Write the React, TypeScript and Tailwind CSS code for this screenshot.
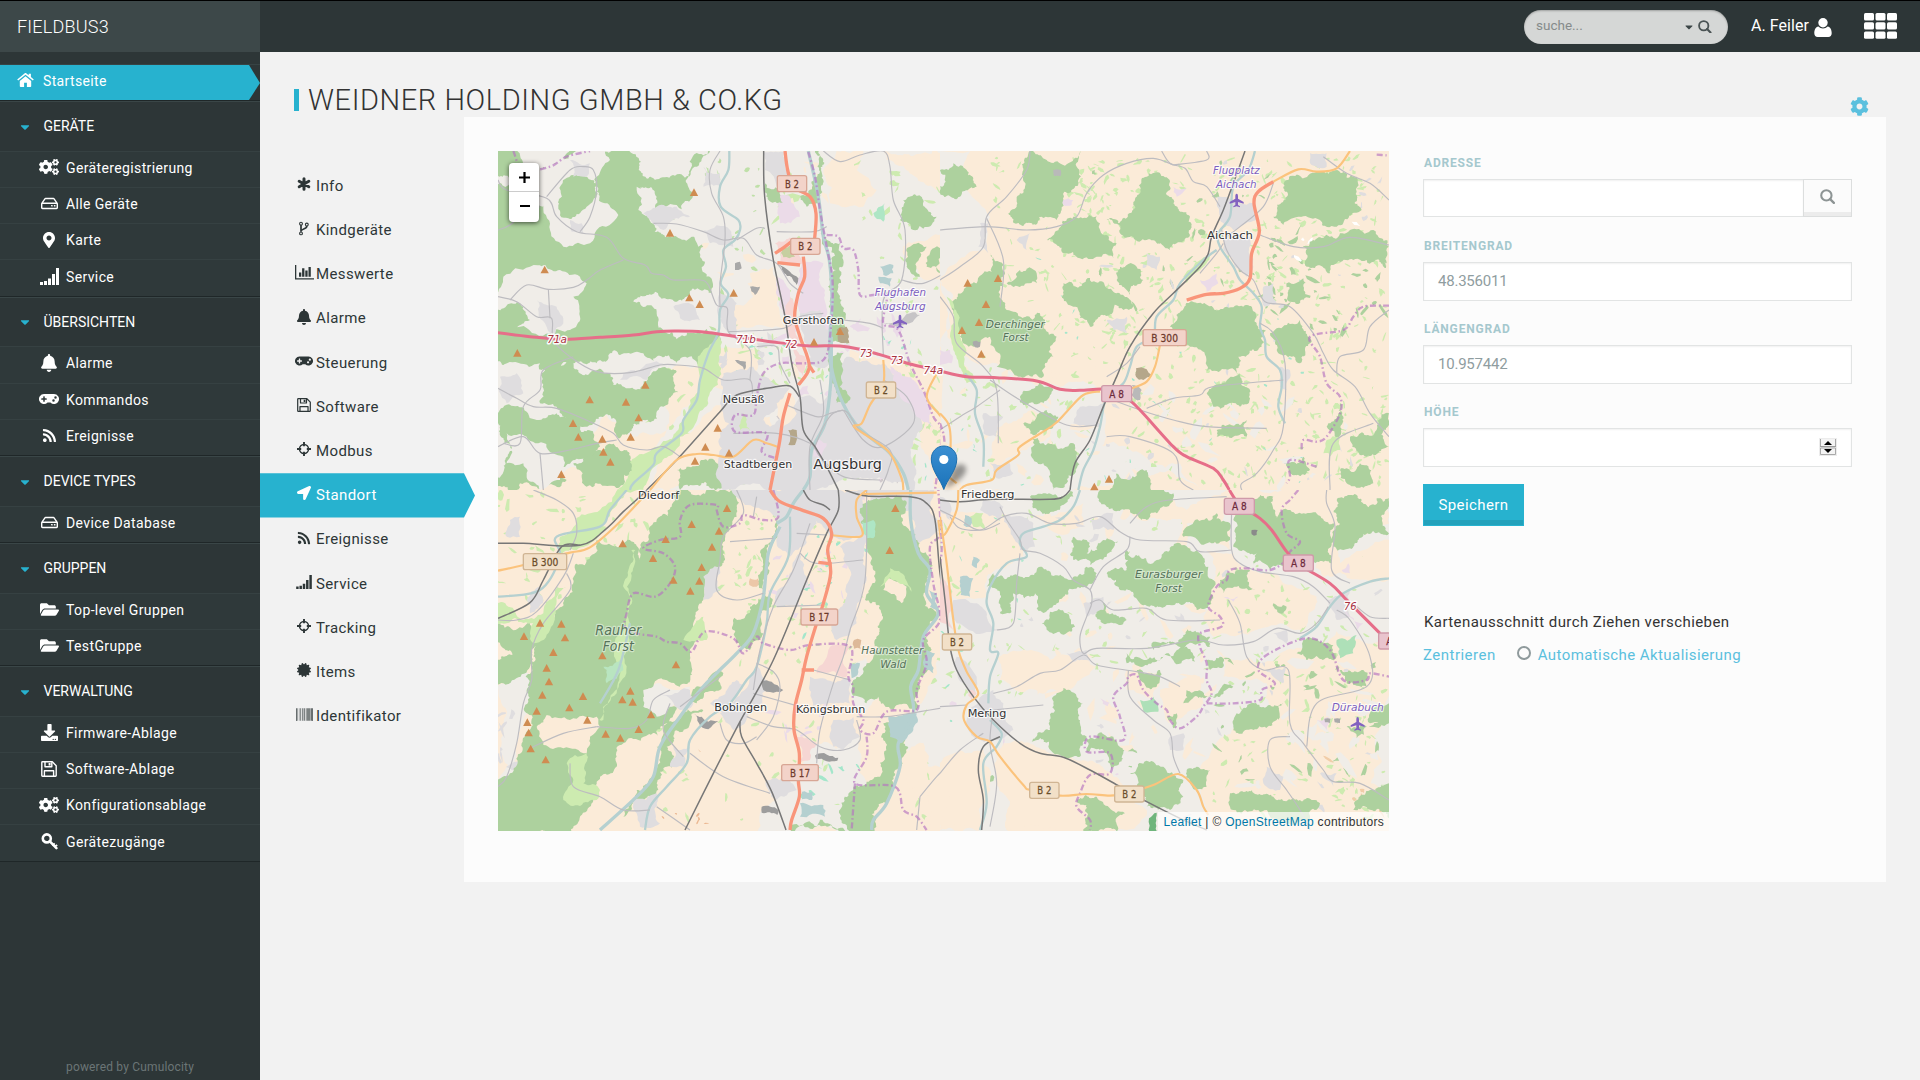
import type { ReactNode } from "react";
import type { IconType } from "react-icons";
import {
  FaBarcode, FaBell, FaCaretDown, FaCertificate, FaCog, FaCogs,
  FaDownload, FaFolderOpen, FaGamepad, FaLocationArrow,
  FaMapMarkerAlt, FaRegHdd, FaRss,
} from "react-icons/fa";

/* ---------- icons ---------- */

type IconProps = { className?: string };

const SignalBars = ({ className }: IconProps) => (
  <svg viewBox="0 0 19 17" className={className} fill="currentColor">
    <path d="M0 14h3v3H0zM4 13h3v4H4zM8 10.5h3V17H8zM12 6h3v11h-3zM16 0h3v17h-3z" />
  </svg>
);

const BarChart = ({ className }: IconProps) => (
  <svg viewBox="0 0 19 15" className={className} fill="currentColor">
    <path d="M0 0h1.3v13.200H19V14.500H0zM4 7.500h2.300v4.300H4zM7.100 3.200h2.300v8.600H7.100zM10.300 5.500h2.300v6.300h-2.300zM13.500 2h2.300v9.800h-2.300z" />
  </svg>
);

const Fork = ({ className }: IconProps) => (
  <svg viewBox="0 0 12 16" className={className} fill="none" stroke="currentColor">
    <circle cx="2.800" cy="2.800" r="1.500" strokeWidth="1.200" />
    <circle cx="2.800" cy="13.200" r="1.500" strokeWidth="1.200" />
    <circle cx="9" cy="3.800" r="1.500" strokeWidth="1.200" />
    <path d="M2.800 4.300v7.200M9 5.300c0 3.700-6.200 2.600-6.200 5.700" strokeWidth="1.800" />
  </svg>
);

const Asterisk = ({ className }: IconProps) => (
  <svg viewBox="0 0 14 14" className={className} stroke="currentColor" strokeWidth="3" strokeLinecap="round">
    <path d="M7 1.700v10.600M2.200 4.300l9.600 5.400M2.200 9.700l9.600-5.400" />
  </svg>
);

const Target = ({ className }: IconProps) => (
  <svg viewBox="0 0 14 14" className={className} fill="none" stroke="currentColor">
    <circle cx="7" cy="7" r="4.500" strokeWidth="1.500" />
    <path d="M7 0v4.200M7 9.800V14M0 7h4.200M9.800 7H14" strokeWidth="1.900" />
  </svg>
);

const Floppy = ({ className }: IconProps) => (
  <svg viewBox="0 0 16 16" className={className} fill="none" stroke="currentColor" strokeWidth="1.400" strokeLinejoin="round">
    <path d="M.8 1.500c0-.4.300-.7.700-.7h9.800l3.900 3.900v9.800c0 .4-.3.700-.7.700h-13c-.4 0-.7-.3-.7-.7z" />
    <path d="M3.400 15v-5.200h9.200V15M4 1v4.700h6.800V1.200" />
    <path d="M8.600 2v2.600" strokeWidth="2" />
  </svg>
);

const KeyIcon = ({ className }: IconProps) => (
  <svg viewBox="0 0 17 17" className={className} fill="none" stroke="currentColor">
    <circle cx="5.800" cy="5.400" r="4" strokeWidth="2.600" />
    <path d="M8.600 8.200l6.800 7" strokeWidth="2.500" strokeLinecap="round" />
    <path d="M11.400 12.600l2.300-2.200M13.800 13.600l2.400-1.600" strokeWidth="1.800" />
  </svg>
);

const House = ({ className }: IconProps) => (
  <svg viewBox="0 0 17 14" className={className} fill="currentColor">
    <path d="M8.500 3.300L14.200 8v5.200c0 .4-.3.800-.8.800H9.900V9.800H7.100V14H3.600c-.4 0-.8-.3-.8-.8V8z" />
    <path d="M8.500 0c.4 0 .7.100 1 .4l2.200 1.800V.7h2.200V4l2.900 2.500-1 1.100L8.500 1.700 1.200 7.600l-1-1.100L7.500.4c.3-.3.600-.4 1-.4z" />
  </svg>
);

const Magnifier = ({ className }: IconProps) => (
  <svg viewBox="0 0 16 16" className={className} fill="none" stroke="currentColor">
    <circle cx="6.800" cy="6.800" r="5.500" strokeWidth="2.200" />
    <path d="M10.800 10.800l4 4" strokeWidth="2.500" strokeLinecap="round" />
  </svg>
);

const Grid9 = ({ className }: IconProps) => (
  <svg viewBox="0 0 33 26" className={className} fill="currentColor">
    {[0, 11.5, 23].map((x) => [0, 9.2, 18.4].map((y) => (
      <rect key={`${x}-${y}`} x={x} y={y} width="10" height="7.400" rx="1.500" />
    )))}
  </svg>
);

const Person = ({ className }: IconProps) => (
  <svg viewBox="0 0 18 19" className={className} fill="currentColor">
    <circle cx="9" cy="4.800" r="4.700" />
    <path d="M4.400 8.400C1.500 8.800.3 11.800.3 15.300.3 17.600 1.600 19 3.700 19h10.600c2.100 0 3.400-1.400 3.400-3.700 0-3.500-1.200-6.500-4.100-6.900-1.200 1.200-2.800 2-4.600 2s-3.400-.8-4.600-2z" />
  </svg>
);

/* ---------- sidebar ---------- */

type AnyIcon = IconType | ((p: IconProps) => ReactNode);
type Item = { label: string; icon: AnyIcon; size?: string };

const sections: { title: string; items: Item[] }[] = [
  { title: "GERÄTE", items: [
    { label: "Geräteregistrierung", icon: FaCogs, size: "size-5" },
    { label: "Alle Geräte", icon: FaRegHdd },
    { label: "Karte", icon: FaMapMarkerAlt, size: "size-4" },
    { label: "Service", icon: SignalBars, size: "w-[19px] h-[17px]" },
  ] },
  { title: "ÜBERSICHTEN", items: [
    { label: "Alarme", icon: FaBell, size: "size-[18px]" },
    { label: "Kommandos", icon: FaGamepad, size: "size-5" },
    { label: "Ereignisse", icon: FaRss, size: "size-[15px]" },
  ] },
  { title: "DEVICE TYPES", items: [{ label: "Device Database", icon: FaRegHdd }] },
  { title: "GRUPPEN", items: [
    { label: "Top-level Gruppen", icon: FaFolderOpen, size: "size-[19px]" },
    { label: "TestGruppe", icon: FaFolderOpen, size: "size-[19px]" },
  ] },
  { title: "VERWALTUNG", items: [
    { label: "Firmware-Ablage", icon: FaDownload },
    { label: "Software-Ablage", icon: Floppy, size: "size-4" },
    { label: "Konfigurationsablage", icon: FaCogs, size: "size-5" },
    { label: "Gerätezugänge", icon: KeyIcon, size: "size-[17px]" },
  ] },
];

function Sidebar() {
  return (
    <aside className="flex w-[260px] shrink-0 flex-col bg-[#2d3637] text-white">
      <div className="flex h-[51px] items-center bg-[#3d4849] pl-[17px] text-[18px] font-light tracking-[0.22px]">
        FIELDBUS3
      </div>
      <div className="mt-3 border-t border-[#374344]">
        <div className="flex h-[35px] items-center bg-[#27b2cf] pl-[17px] text-[14px] tracking-[0.36px] [clip-path:polygon(0_0,249px_0,260px_18px,249px_35px,0_35px)]">
          <House className="-mt-1.5 h-3.5 w-[17px]" />
          <span className="-mt-0.5 ml-[9px]">Startseite</span>
        </div>
        <div className="h-px bg-[#1f2728]" />
      </div>
      {sections.map((s) => (
        <div key={s.title} className="border-b border-[#1f2728]">
          <div className="flex h-[49.6px] items-center border-t border-[#3a4647] pl-[18px] pt-px text-[14px]">
            <FaCaretDown className="size-3.5 text-[#27b2cf]" />
            <span className="ml-[11.5px]">{s.title}</span>
          </div>
          {s.items.map(({ label, icon: Icon, size }) => (
            <div key={label} className="flex h-[36.27px] items-center border-t border-[#364142] bg-[#2f393a] pb-[2px] pl-[39px] text-[14px] tracking-[0.37px]">
              <span className="-mt-0.5 flex w-5 justify-center">
                <Icon className={`${size ?? "size-[17px]"} shrink-0`} />
              </span>
              <span className="ml-[7px]">{label}</span>
            </div>
          ))}
        </div>
      ))}
      <div className="mt-auto pb-[5px] text-center text-[12px] leading-4 tracking-[0.17px] text-[#6b7576]">powered by Cumulocity</div>
    </aside>
  );
}

/* ---------- tabs ---------- */

const tabs: (Item & { active?: boolean })[] = [
  { label: "Info", icon: Asterisk, size: "size-[14px]" },
  { label: "Kindgeräte", icon: Fork, size: "w-3 h-[15px]" },
  { label: "Messwerte", icon: BarChart, size: "w-[19px] h-[15px]" },
  { label: "Alarme", icon: FaBell, size: "size-[16px]" },
  { label: "Steuerung", icon: FaGamepad, size: "size-[18px]" },
  { label: "Software", icon: Floppy, size: "size-[14px]" },
  { label: "Modbus", icon: Target, size: "size-[14px]" },
  { label: "Standort", icon: FaLocationArrow, size: "size-[14px]", active: true },
  { label: "Ereignisse", icon: FaRss, size: "size-[14px]" },
  { label: "Service", icon: SignalBars, size: "w-4 h-[14px]" },
  { label: "Tracking", icon: Target, size: "size-[14px]" },
  { label: "Items", icon: FaCertificate, size: "size-[14px]" },
  { label: "Identifikator", icon: FaBarcode, size: "size-[17px]" },
];

function Tabs() {
  return (
    <nav className="w-[204px] shrink-0 pt-[47px]">
      {tabs.map(({ label, icon: Icon, size, active }) => (
        <div
          key={label}
          className={`flex h-[44.2px] items-center pl-[34px] text-[15px] tracking-[0.38px] ${
            active
              ? "relative z-10 -mr-[11px] bg-[#27b2cf] text-white [clip-path:polygon(0_0,204px_0,215px_50%,204px_100%,0_100%)]"
              : "text-[#2d3637]"
          }`}
        >
          <span className="-mt-1 flex w-5 justify-center">
            <Icon className={`${size} shrink-0`} />
          </span>
          <span className="ml-0.5">{label}</span>
        </div>
      ))}
    </nav>
  );
}

/* ---------- map ---------- */

type Pt = [number, number];

const makeRng = (seed: number) => () => {
  seed = (seed * 1664525 + 1013904223) >>> 0;
  return seed / 4294967296;
};

const pts = (s: string): Pt[] => s.trim().split(/\s+/).map((p) => p.split(",").map(Number) as Pt);

/* Splits every edge by midpoint displacement, for natural looking outlines. */
function rough(s: string, seed: number, amount = 0.2, min = 14) {
  const rnd = makeRng(seed);
  const src = pts(s);
  const out: Pt[] = [];
  const walk = (a: Pt, b: Pt) => {
    const dx = b[0] - a[0];
    const dy = b[1] - a[1];
    const len = Math.hypot(dx, dy);
    if (len < min) { out.push(a); return; }
    const k = (rnd() - 0.5) * 2 * amount;
    const m: Pt = [(a[0] + b[0]) / 2 - dy * k, (a[1] + b[1]) / 2 + dx * k];
    walk(a, m);
    walk(m, b);
  };
  src.forEach((p, i) => walk(p, src[(i + 1) % src.length]));
  return "M" + out.map((p) => p[0].toFixed(0) + " " + p[1].toFixed(0)).join("L") + "Z";
}

function smooth(s: string) {
  const p = pts(s);
  let d = `M${p[0][0]} ${p[0][1]}`;
  for (let i = 0; i < p.length - 1; i++) {
    const a = p[i - 1] ?? p[i];
    const b = p[i];
    const c = p[i + 1];
    const e = p[i + 2] ?? c;
    d += `C${b[0] + (c[0] - a[0]) / 6} ${b[1] + (c[1] - a[1]) / 6} ${c[0] - (e[0] - b[0]) / 6} ${c[1] - (e[1] - b[1]) / 6} ${c[0]} ${c[1]}`;
  }
  return d;
}

const LAND = "#f0ede8";
const FARM = "#fbebd8";
const FOREST = "#add19e";
const GRASS = "#cdebb0";
const TOWN = "#dfdddf";
const WATER = "#b5d0d0";
const PINK = "#ebdbe8";

type Line = [kind: "road" | "river" | "stream" | "rail" | "mway" | "trunk" | "prim" | "border", path: string];
type Label = [text: string, x: number, y: number, w: number, size: number];
type Sheet = {
  ox: number; oy: number; base: string;
  areas: [string, string][];
  specks: [color: string, x0: number, y0: number, x1: number, y1: number, n: number, r: number][];
  lines: Line[];
  peaks: string;
  towns: Label[];
  woods: Label[];
  airports: Label[];
  planes: string;
  exits: [string, number, number][];
  shields: [string, number, number, number, "a" | "b" | "c"][];
};

const NW: Sheet = {
  ox: 490, oy: 150, base: LAND,
  areas: [
    [FARM, "780,370 850,350 870,440 895,540 740,540 720,470 790,440"],
    [FARM, "530,660 640,640 660,700 600,760 540,830 500,850 420,860 350,795 325,830 300,880 430,990 480,900 530,840"],
    [FARM, "660,590 800,600 790,670 700,720 650,660"],
    [FARM, "1000,70 1040,3 1120,3 1100,60 1160,120 1120,170 1020,160"],
    [FARM, "1080,600 1380,680 1380,1020 1330,1020 1290,860 1250,740 1140,680"],
    [FARM, "560,860 700,760 840,800 860,1020 480,1020"],
    [FARM, "1240,290 1380,240 1380,380 1290,380"],
    [FARM, "1180,3 1380,3 1380,120 1260,70"],
    [FARM, "24,985 480,985 480,1025 24,1025"],
    [FOREST, "20,0 270,0 160,50 150,140 90,95 20,75"],
    [FOREST, "340,0 660,0 600,60 610,130 540,210 500,140 450,110 455,190 560,260 640,290 650,380 665,430 560,455 430,455 500,490 520,540 690,560 650,640 560,640 500,620 420,640 360,610 320,640 250,640 170,660 20,630 20,110 120,160 300,200"],
    [LAND, "165,55 200,40 270,0 345,0 360,30 320,80 310,130 345,160 385,195 320,240 300,280 230,292 180,240 160,170 110,140 90,100 130,70"],
    [LAND, "440,110 470,130 490,180 560,165 600,180 650,210 660,280 625,290 600,210 540,210 520,255 445,180"],
    [LAND, "40,380 120,350 210,360 270,380 290,400 250,440 270,500 240,540 180,550 20,545 20,440"],
    [FOREST, "20,480 100,470 120,510 60,545 20,545"],
    [FOREST, "210,110 250,75 310,90 310,150 270,190 235,205 205,170"],
    [LAND, "360,625 460,610 520,640 520,665 370,705"],
    [LAND, "20,650 150,640 165,700 150,760 20,780"],
    [FOREST, "155,670 250,630 360,670 370,705 530,655 560,665 520,770 460,810 415,850 385,865 360,795 330,800 285,830 200,770 150,760"],
    [FOREST, "20,790 200,790 310,850 330,890 290,930 200,950 230,990 190,1005 90,1000 20,1012"],
    [LAND, "50,850 110,860 220,920 210,990 150,1020 100,940 50,940"],
    [FOREST, "250,940 330,900 420,930 430,960 400,1005 290,1010"],
    [GRASS, "640,600 690,555 685,640 655,760 570,860 510,940 460,1020 380,1020 500,890 570,820 600,750 630,690"],
    [FOREST, "560,960 640,930 720,980 720,1020 570,1020"],
    [TOWN, "140,450 200,470 220,520 190,560 165,520"],
    [TOWN, "30,680 80,670 100,730 50,760"],
    [TOWN, "240,30 300,40 290,80 250,80"],
    [TOWN, "240,210 275,220 280,250 245,245"],
    [TOWN, "400,670 480,640 520,640 470,690 390,690"],
    [TOWN, "640,50 690,70 690,110 640,110"],
    [TOWN, "640,240 720,240 730,290 660,280"],
    [TOWN, "690,430 740,460 740,560 700,530"],
    [TOWN, "460,190 560,170 600,200 520,240"],
    [TOWN, "550,470 610,465 630,510 570,505"],
    [PINK, "850,140 900,140 930,200 870,220"],
    [PINK, "860,380 900,420 930,540 890,560 870,470"],
    ["#f6d6d3", "900,440 915,540 950,640 940,680 910,600 885,520"],
    [PINK, "940,330 1000,340 1020,560 950,570 930,440"],
    [TOWN, "930,490 990,480 1020,570 1010,650 960,640"],
    [TOWN, "700,670 790,650 850,700 900,710 820,810 720,830 690,760"],
    [TOWN, "840,830 930,740 1000,760 1070,620 1180,640 1250,710 1300,790 1270,880 1270,1025 840,1025 700,1025 690,850 750,780"],
    [TOWN, "820,6 880,6 900,100 860,110 825,60"],
    [PINK, "1200,650 1280,700 1330,830 1280,800 1230,740"],
    [FARM, "860,760 900,720 920,790 880,830"],
    ["#f6d6d3", "855,280 900,262 940,340 870,342"],
    ["#c6cfa0", "875,295 905,285 915,320 880,322"],
    [FOREST, "825,100 870,120 880,160 830,130"],
    [FOREST, "930,140 975,0 1000,30 1000,90 985,160 950,170"],
    [FOREST, "1000,240 1050,280 1060,330 1050,380 1055,450 1060,520 1075,580 1020,560 1020,400"],
    [FOREST, "1010,600 1060,610 1060,660 1080,750 1040,760 1020,690"],
    [FOREST, "1240,150 1300,150 1340,200 1270,240 1230,210"],
    [FOREST, "1260,290 1310,290 1290,380 1250,350"],
    [FOREST, "1320,310 1370,290 1350,370 1310,350"],
    ["#b5a78a", "1040,540 1070,530 1078,580 1045,575"],
    ["#b5a78a", "895,840 920,840 915,885 895,885"],
    ["#aee6c5", "1150,190 1185,160 1180,215"],
    [WATER, "1170,350 1210,345 1210,370 1180,375"],
    [WATER, "1165,380 1205,385 1200,410 1170,400"],
    ["#9a9a9a", "860,340 900,365 925,385 920,405 880,370"],
    ["#a8a8a8", "735,340 750,335 755,355 735,360"],
    ["#a8a8a8", "780,410 810,410 795,435"],
    ["#a8a8a8", "735,630 768,635 762,660"],
    [GRASS, "760,790 780,840 750,840"],
    [PINK, "980,860 1010,880 1000,930 970,920"],
    ["#c6c4c6", "1180,520 1260,490 1290,495 1220,530"],
  ],
  specks: [
    [GRASS, 830, 20, 930, 330, 14, 12], [GRASS, 860, 330, 1010, 700, 30, 8], [GRASS, 700, 560, 860, 800, 24, 10],
    [GRASS, 1030, 600, 1380, 1000, 60, 9], [GRASS, 1080, 20, 1380, 480, 34, 9], [PINK, 860, 500, 1300, 1000, 30, 16],
    [FARM, 830, 620, 1300, 1000, 26, 12], ["#a4e6cb", 700, 560, 1380, 1000, 60, 5], [GRASS, 720, 800, 1250, 1000, 50, 8],
    [TOWN, 640, 560, 860, 760, 12, 14], [GRASS, 440, 600, 640, 900, 12, 10], [FARM, 880, 20, 1010, 250, 8, 16],
    ["#bfe0a8", 640, 20, 820, 560, 22, 7], [FARM, 640, 280, 800, 560, 6, 16], ["#cfc9cb", 860, 780, 1240, 1000, 30, 9],
  ],
  lines: [
    ["stream", "718,3 715,60 690,110 692,170 745,210 750,240 735,270 700,300 708,350 692,400 715,435 690,480 686,545 655,610 630,690 620,750 580,810 575,850 500,910 490,945 430,1000 420,1020"],
    ["river", "955,3 985,140 1000,260 1018,330 1026,450 1020,560 1022,640 1050,740 1095,820 1150,870 1200,910 1240,970 1255,1020"],
    ["river", "1024,560 1022,700 1005,820 965,900 960,980 940,1020"],
    ["road", "24,90 50,120 170,145 200,200 260,245 350,262 400,325 465,345 485,370 520,375 550,390 630,390 655,405 680,465 712,475 715,545 780,600 780,690"],
    ["road", "170,140 240,60 280,50 310,60 320,120 300,200 270,245"],
    ["road", "24,440 80,455 140,500 185,505 190,570 240,620 320,665 420,668 510,645 560,645 640,655 700,690 780,690 785,760"],
    ["road", "24,240 60,225 100,190 150,170"],
    ["road", "24,715 80,745 130,770 200,775 300,815 370,850 400,885 470,900 520,890 570,920"],
    ["road", "400,330 330,360 290,390 250,412 175,418 110,405 60,450"],
    ["road", "175,418 180,505"], ["road", "250,620 160,660 150,720 100,770 90,880 40,880"],
    ["road", "690,3 660,60 665,130 700,200 705,270 690,400 690,470"],
    ["road", "490,220 560,222 640,245 700,270 760,265 800,315 860,340 900,400 940,430"],
    ["road", "1000,3 1050,35 1110,15 1180,3 1200,50 1210,150 1245,240 1235,390 1180,450 1180,620"],
    ["road", "740,270 800,235 825,235"], ["road", "860,245 970,245 1010,230"],
    ["road", "715,545 880,535 930,500 1000,490"], ["road", "1235,390 1300,400 1380,360"],
    ["road", "1060,510 1140,520 1180,535"], ["road", "800,590 860,590 870,640 900,700"],
    ["road", "24,890 100,860 150,910 240,900 320,880 380,870"], ["road", "150,910 160,1020"],
    ["road", "890,765 980,800 1020,790 1060,780"], ["road", "1060,780 1120,870 1180,890 1270,820 1250,740 1180,690"],
    ["road", "730,850 860,850 960,880 990,920 1060,980 1170,990"], ["road", "990,690 1000,790 960,890 960,1020"],
    ["border", "955,6 975,80 990,180 1010,290 1028,400 1020,560 1000,630 940,640 870,640 820,670 800,740 790,795 735,795 735,845 830,850 815,905 860,925"],
    ["border", "1010,255 1045,260 1060,295 1090,300 1105,360 1110,435 1150,435 1190,440 1180,520 1225,540 1260,640 1300,720 1330,800 1355,850 1335,1020"],
    ["border", "70,3 100,60 180,50 230,20 300,3"],
    ["rail", "821,3 824,140 850,330 885,500 905,640 930,740 940,840 975,890 1010,950 1045,1020"],
    ["rail", "470,1020 560,930 690,785 740,735 850,712 900,708 928,740"],
    ["road", "975,890 1000,830 1030,790 1070,785 1110,840 1200,900 1195,960 1170,1020"],
    ["prim", "480,1020 560,930 620,912 670,915 730,920 790,870 830,880 862,890"],
    ["prim", "1180,630 1180,700 1140,765 1115,820 1092,830 1150,870 1200,910 1235,985 1240,1020"],
    ["prim", "1340,670 1310,740 1345,790 1380,830"],
    ["trunk", "885,3 893,60 910,110 960,140 978,190 974,265"],
    ["trunk", "855,310 885,290 910,270"], ["trunk", "862,338 930,345"],
    ["trunk", "940,320 944,380 925,430 914,500 930,560 958,650 925,705"],
    ["trunk", "956,645 972,668"],
    ["trunk", "900,730 880,800 868,880 850,970 840,1020"],
    ["mway", "0,545 120,560 220,568 330,562 430,555 500,545 560,543 640,546 740,560 850,576 950,587 1050,588 1110,598 1180,617 1260,642 1380,668"],
  ],
  peaks: "612,128 540,250 164,360 598,444 629,464 731,430 82,610 466,706 299,750 408,757 446,804 249,821 265,862 337,868 422,862 340,907 361,937 214,974 683,835 646,892 717,910 615,934 972,577 1050,545",
  towns: [["Gersthofen", 970, 521, 184, 34], ["Neusäß", 761, 760, 126, 34], ["Stadtbergen", 804, 955, 205, 34], ["Augsburg", 1073, 958, 206, 43]],
  woods: [],
  airports: [["Flughafen", 1231, 438, 154, 34], ["Augsburg", 1231, 479, 152, 34]],
  planes: "1230,514",
  exits: [["71a", 201, 580], ["71b", 768, 578], ["72", 903, 595], ["73", 1128, 620], ["73", 1221, 643], ["74a", 1330, 671]],
  shields: [["B 2", 906, 101, 88, "b"], ["B 2", 946, 289, 88, "b"], ["B 2", 1173, 720, 88, "c"]],
};

const NE: Sheet = {
  ox: 940, oy: 150, base: FARM,
  areas: [
    [LAND, "0,3 90,3 80,120 150,200 130,300 0,390"], [LAND, "0,390 40,440 40,600 0,580"],
    [LAND, "0,580 170,640 330,700 480,730 480,900 400,1020 60,1020 0,800"],
    [LAND, "400,860 560,890 720,940 780,1020 380,1020"],
    [FARM, "170,830 280,780 330,860 260,900 160,960"],
    [FOREST, "270,0 420,0 415,90 365,180 350,210 250,228 205,190 240,130 250,60"],
    [FOREST, "0,60 40,40 80,60 110,110 60,140 0,130"],
    [FOREST, "620,80 690,95 700,160 750,200 750,255 690,300 620,270 540,250 500,210 590,140"],
    [FOREST, "345,245 480,220 530,280 520,325 420,325 370,310 320,270"],
    [FOREST, "40,490 110,400 150,310 190,345 180,420 200,480 300,490 350,560 340,620 310,680 220,670 170,650 150,560 100,590 60,560"],
    [FOREST, "370,400 520,425 580,470 480,500 450,530 400,470"],
    [FOREST, "540,350 590,350 610,390 570,435 530,390"],
    [FOREST, "690,530 770,460 860,470 950,500 965,590 895,620 890,670 800,665 750,590 700,570"],
    [FOREST, "1040,90 1250,80 1265,180 1190,230 1140,210 1030,225 1000,200 1040,140"],
    [FOREST, "1120,270 1200,250 1300,240 1347,290 1340,340 1240,330 1170,370 1100,350"],
    [FOREST, "990,550 1080,510 1110,580 1080,640 1010,600"],
    [FOREST, "800,730 900,670 930,720 900,770 820,770"],
    [FOREST, "830,840 920,810 920,860 830,860"],
    [FOREST, "240,740 300,695 340,720 310,760 250,765"],
    [FOREST, "250,820 320,780 355,800 340,830 270,850"],
    [FOREST, "275,860 400,880 410,920 380,1000 340,1020 310,940"],
    [FOREST, "500,1025 530,970 620,960 640,1025"],
    [FOREST, "1040,400 1090,385 1100,440 1050,455"],
    [FOREST, "1160,830 1200,760 1210,800 1190,870"],
    [FOREST, "1230,860 1347,790 1347,890 1280,920"],
    [FOREST, "1040,940 1090,920 1110,960 1050,970"],
    [FOREST, "1200,960 1260,940 1300,1000 1220,1000"],
    [FOREST, "240,360 290,370 290,400 200,400"],
    [GRASS, "1160,870 1200,860 1200,900 1150,910"],
    [GRASS, "20,440 60,560 80,660 110,700 80,700 40,600"],
    [GRASS, "600,340 650,330 640,345"],
    [GRASS, "730,380 760,350 830,300 800,340 740,400"],
    [TOWN, "830,140 900,160 940,160 950,210 880,240 840,200"],
    [TOWN, "860,250 930,260 940,350 920,380 850,300"],
    [TOWN, "120,220 145,220 145,310 115,290"], [TOWN, "230,270 270,250 260,300"],
    [TOWN, "500,510 560,500 560,550 520,540"], [TOWN, "620,310 660,320 650,360 620,345"],
    [TOWN, "1110,10 1160,10 1160,50 1110,40"], [TOWN, "420,770 490,760 480,830 400,820"],
    [TOWN, "130,790 190,800 170,860 130,850"], [TOWN, "150,940 210,940 220,970 170,985"],
    [TOWN, "970,410 1000,400 1010,460 975,470"], [TOWN, "1020,650 1050,660 1040,720 1020,710"],
    [PINK, "780,390 830,370 835,400 800,425"], [PINK, "700,110 740,115 710,140"], [PINK, "0,600 30,600 35,640 0,645"],
    [PINK, "370,150 400,150 395,165 370,165"],
    ["#b5a78a", "588,655 620,658 635,675 610,690 588,680"],
    ["#b9b9b9", "575,705 605,720 600,750 575,735"],
    ["#aaaaaa", "98,575 122,575 120,590 105,592"], ["#b9b9b9", "340,60 362,60 362,78 342,78"],
  ],
  specks: [
    [GRASS, 400, 20, 1340, 700, 380, 7], [GRASS, 150, 20, 600, 560, 110, 7], [GRASS, 560, 700, 1340, 1010, 190, 7],
    [GRASS, 20, 600, 480, 1000, 70, 7], [FOREST, 980, 240, 1340, 560, 60, 10], [FOREST, 420, 20, 1000, 500, 26, 9],
    [TOWN, 420, 20, 1340, 1010, 40, 9], [FARM, 20, 640, 480, 1010, 24, 16], [FARM, 1020, 90, 1340, 350, 14, 9],
    [LAND, 560, 720, 1300, 1010, 26, 20], ["#a4e6cb", 60, 300, 1100, 1010, 26, 4], ["#ffffff", 1060, 200, 1340, 360, 8, 8],
  ],
  lines: [
    ["stream", "945,3 925,60 880,110 870,200 835,250 840,290 880,350 900,390 940,430 965,470 960,530 975,570 980,620 1020,660 1025,710 1015,770 1035,820"],
    ["stream", "830,300 790,330 720,400 700,450 650,500 640,560 590,590 570,650 550,700 500,740 480,830 460,900 430,960 415,1020"],
    ["stream", "75,670 110,720 105,790 130,870 130,950"],
    ["road", "270,3 260,60 200,140 140,200 130,290 60,350 0,390"], ["road", "0,240 140,230 260,240 350,230 410,200 440,130 490,75 560,40 640,25 700,45"],
    ["road", "665,3 690,40 735,55 760,95 800,110 840,170"], ["road", "700,45 800,30 800,3"],
    ["road", "960,255 1060,290 1150,290 1230,262 1347,285"], ["road", "845,240 860,300 900,360 940,390 975,455 1050,470 1120,550 1150,610 1180,660 1245,710 1290,790 1347,860"],
    ["road", "960,520 1000,550 1035,640 1030,830 1000,900 950,970 905,1000 905,1020"],
    ["road", "140,205 190,330 180,470"], ["road", "150,690 240,750 380,825 470,825"],
    ["road", "490,740 600,780 700,810 800,830 980,835"], ["road", "620,775 700,745 780,735 820,710 1030,690"],
    ["road", "500,860 570,860 700,910 720,990 760,1020"], ["road", "0,440 40,500 50,580 130,650 170,720 175,880"],
    ["road", "1000,100 970,170 900,230 860,260"], ["road", "1300,820 1180,880 1170,1020"], ["road", "1347,480 1290,530 1270,600 1200,620 1190,670"],
    ["road", "0,840 60,800 110,770 180,720"], ["road", "500,680 560,640 600,590"], ["road", "1150,20 1220,70 1290,100 1347,150"],
    ["road", "780,370 830,310 850,280"],
    ["border", "1310,14 1340,16"], ["border", "1347,467 1270,470 1240,500 1210,540 1110,560 1140,620 1160,700 1200,740 1200,790 1160,860 1130,875 1090,870 1085,900"],
    ["border", "1130,950 1050,930 1050,980 1040,1000"], ["border", "0,820 10,850 14,880"],
    ["rail", "915,3 880,100 850,180 815,260 805,310 780,350 700,430 640,490 570,590 530,680 490,770 450,870 405,940 390,1020"],
    ["prim", "1230,3 1190,55 1130,65 1075,58 1000,95"], ["prim", "660,585 645,650 620,695 575,715"],
    ["prim", "480,724 430,735 380,785 340,825 240,890 235,915 170,960 155,990 80,1005 60,1020"], ["prim", "0,790 28,830 30,910 10,960 50,1000"],
    ["trunk", "1000,95 955,125 942,160 958,245 935,310 930,385 900,415 850,430 800,433 740,450"],
    ["mway", "0,663 80,680 170,683 290,693 360,718 420,721 500,718 560,745 600,780 700,890 740,920 820,955 850,990 868,1020"],
  ],
  peaks: "83,400 174,386 138,464 117,518 66,542 124,613 507,988 463,1011",
  towns: [["Aichach", 870, 266, 138, 34]],
  woods: [["Derchinger", 226, 533, 177, 34], ["Forst", 227, 574, 78, 34]],
  airports: [["Flugplatz", 889, 72, 140, 34], ["Aichach", 889, 113, 122, 34]],
  planes: "890,151",
  exits: [],
  shields: [["B 300", 674, 563, 130, "b"], ["A 8", 530, 731, 90, "a"]],
};

const SW: Sheet = {
  ox: 490, oy: 490, base: FARM,
  areas: [
    [LAND, "20,590 100,540 135,560 100,700 80,830 60,870 20,900"],
    [LAND, "800,1030 880,860 960,760 1110,740 1130,880 1080,1030"],
    [LAND, "1280,660 1380,480 1380,840 1290,830 1240,740"],
    [LAND, "1080,530 1130,500 1170,620 1120,670 1080,610"],
    [FOREST, "320,150 420,150 450,210 480,130 545,50 560,-5 740,-5 740,80 700,170 690,230 640,330 610,410 600,490 570,590 470,600 430,640 500,640 560,650 400,760 380,800 330,860 240,1030 20,1030 20,880 60,850 95,760 110,600 130,450 200,360 250,280 300,200"],
    [FOREST, "20,400 120,400 130,520 40,580 20,590"],
    [FARM, "140,710 170,675 240,690 320,680 330,710 300,740 290,790 220,775 160,765"],
    [LAND, "460,600 500,580 600,590 560,640 500,680 460,650"],
    [GRASS, "230,820 290,790 280,880 330,900 320,930 220,930 250,870"],
    [GRASS, "20,340 100,390 160,370 200,290 230,290 180,420 130,460 130,400 20,400"],
    [GRASS, "210,140 330,60 385,-5 450,-5 340,100 260,180 200,200"],
    [GRASS, "424,180 436,180 420,400 405,560 340,690 328,690 388,560 408,400"],
    [FOREST, "855,130 870,80 900,90 840,220 840,320 820,430 780,480 735,440 780,350 820,300"],
    [FOREST, "500,770 560,690 640,660 600,700 530,770 500,880 460,930 400,980 440,900 490,860"],
    [FOREST, "580,640 640,590 700,550 690,600 620,640"],
    [GRASS, "580,450 640,380 650,450 600,455"],
    [TOWN, "720,-5 920,-5 980,100 900,200 860,160 870,80 830,60"],
    [TOWN, "900,-5 1120,-5 1130,140 1020,140 940,60"],
    [TOWN, "1050,170 1130,140 1130,270 1100,400 1040,450 1040,360"],
    [TOWN, "860,310 930,190 950,260 920,350 860,350"],
    [TOWN, "510,610 600,600 610,640 570,660"], [TOWN, "690,670 800,530 830,580 770,680 730,720"],
    [TOWN, "660,640 740,570 760,590 700,670"], [TOWN, "960,560 1080,560 1080,640 970,650"],
    [TOWN, "1030,690 1090,680 1110,740 1060,780 1030,770"], [TOWN, "430,930 500,910 510,1000 450,1010"],
    [TOWN, "830,870 900,850 920,900 860,930"], [TOWN, "550,770 600,770 580,830 540,830"],
    [TOWN, "640,260 690,230 690,300 640,330"], [TOWN, "110,330 150,290 160,330 120,370"],
    [TOWN, "60,90 90,80 90,140 50,140"], [TOWN, "1120,-5 1330,-5 1350,120 1280,160 1260,60 1140,40"],
    ["#f6d6d3", "1020,470 1080,470 1070,560 980,550"], ["#f6d6d3", "920,740 980,760 960,810 930,820"],
    [FOREST, "1125,40 1180,25 1250,35 1290,180 1310,300 1340,380 1300,440 1280,660 1210,660 1170,600 1130,640 1085,610 1100,560 1130,520 1125,330 1150,240 1130,150"],
    [FOREST, "1180,700 1240,740 1210,860 1190,940 1150,1030 1080,1030 1090,890 1170,860"],
    [FARM, "1180,300 1190,260 1250,290 1235,340"], [GRASS, "1170,290 1200,235 1245,265 1265,305 1245,285 1200,262"],
    [WATER, "1195,680 1280,670 1270,720 1230,760 1200,740"],
    [WATER, "1080,520 1110,520 1085,565"], [WATER, "1310,480 1335,490 1330,550 1305,540"], [WATER, "1315,300 1340,310 1340,360 1320,350"],
    [WATER, "930,940 1000,945 1005,980 930,980"], [WATER, "936,905 968,905 966,930 936,928"],
    ["#aee6c5", "1115,95 1150,90 1150,145 1130,145"], ["#b9e5c0", "340,530 390,510 400,540 350,580"],
    ["#ecc7a8", "780,265 805,265 800,290 778,285"], ["#ddb999", "1092,450 1114,450 1112,476 1092,476"],
    [FARM, "1240,800 1300,760 1320,840 1260,900"],
    [FARM, "1310,920 1380,840 1380,1020 1320,1000"],
    ["#9d9d9d", "815,575 845,575 880,600 860,605 820,600"], ["#9d9d9d", "815,950 865,960 862,975 815,968"],
    ["#9d9d9d", "975,797 1045,803 1042,812 978,806"], ["#9d9d9d", "612,670 655,695 685,693 655,718"],
    [FOREST, "900,1000 1000,1008 1080,1030 900,1030"],
  ],
  specks: [
    [GRASS, 24, 0, 380, 330, 36, 8], [GRASS, 740, 0, 1130, 560, 80, 7], ["#a4e6cb", 860, 60, 1130, 460, 34, 6],
    [PINK, 840, 0, 1120, 420, 24, 10], [GRASS, 600, 180, 860, 440, 14, 8], [GRASS, 1130, 160, 1280, 330, 14, 11],
    [TOWN, 24, 600, 90, 860, 8, 12], [GRASS, 500, 620, 1060, 1010, 34, 7], [GRASS, 330, 0, 470, 180, 12, 9],
    ["#a4e6cb", 920, 820, 1110, 960, 10, 9], [GRASS, 1280, 480, 1380, 1010, 14, 8], ["#ebb892", 500, 780, 700, 1000, 7, 5],
    [PINK, 780, 560, 1000, 740, 8, 12], [FARM, 950, 0, 1120, 420, 14, 9],
  ],
  lines: [
    ["river", "860,100 890,80 910,40 940,0"],
    ["river", "870,110 835,190 820,320 790,430 740,490 640,590 570,680 510,770 490,860 440,920 330,1020"],
    ["stream", "900,80 895,200 840,310 830,400 800,530 770,570 720,640 660,680 600,750 590,820 530,890 480,950 465,1020"],
    ["stream", "410,0 360,60 330,110 200,140 210,200 150,300 24,320"],
    ["stream", "420,400 385,540 330,640"],
    ["river", "1262,0 1262,90 1285,190 1320,240 1310,310 1345,370 1300,440 1285,540 1262,590 1270,670 1225,760 1230,830 1190,940 1150,990 1145,1020"],
    ["road", "130,0 200,30 250,70 260,130 240,180"], ["road", "24,390 80,390 140,365 220,260 250,190"],
    ["road", "230,250 240,300 160,400 125,480 125,570 100,640 80,760 50,860 24,890"],
    ["road", "740,0 760,70 700,140 690,210 680,300 740,330 820,310"], ["road", "720,155 850,145"], ["road", "860,350 1000,345"],
    ["road", "960,100 910,240 850,350 810,480 790,600"], ["road", "800,520 850,545 870,590 850,680 800,750"],
    ["road", "690,700 710,750 760,760 800,740"], ["road", "770,680 850,710 920,720 990,770 1060,780 1110,750 1100,690"],
    ["road", "1130,0 1125,270 1080,420 1060,500 1030,580 990,720 980,820"], ["road", "970,540 1080,570"], ["road", "790,610 930,650"],
    ["road", "600,790 700,860 840,910"], ["road", "320,710 420,715 470,690 490,630 540,600"], ["road", "540,640 520,720 580,800"],
    ["road", "120,775 220,730 320,710"], ["road", "240,820 250,890 330,920 400,960 480,960"], ["road", "1100,680 1190,680 1290,665 1380,650"],
    ["road", "690,560 570,650"], ["road", "1290,920 1340,860 1380,820"], ["road", "1290,920 1280,1020"], ["road", "930,190 980,220 1120,210"],
    ["road", "500,950 600,1020"], ["road", "800,20 790,80"], ["road", "920,130 1010,135"],
    ["border", "850,0 865,80 820,90 760,75 750,100 700,110 680,60 680,45 600,45 570,90 570,140 510,150 460,175 520,190 555,230 540,280 495,320 430,310 410,370 405,410 440,430 500,440 530,455 570,460 605,485 645,425 730,445 760,490 800,440 820,460 900,480 960,465 1080,470 1075,560 1090,590 1090,640 1120,690 1110,720 1150,730 1190,665 1280,660 1280,600 1310,520 1300,450 1350,390 1330,280 1320,170 1350,130 1345,0"],
    ["border", "1130,740 1130,800 1095,880 1215,890 1240,960 1280,980 1310,1020"], ["border", "1095,880 1085,1020"],
    ["rail", "24,160 100,160 270,166 350,115 400,65 450,20 472,0"], ["rail", "24,385 120,338 160,270 215,170 270,166"],
    ["rail", "1045,0 1045,60 1010,130 950,270 850,510 750,695 670,850 585,1020"], ["rail", "750,695 755,740 800,820 845,905 888,1020"],
    ["rail", "940,0 960,30 1000,45 1020,60"],
    ["rail", "1065,0 1130,18 1260,20 1310,40 1335,90 1350,250 1378,430"],
    ["prim", "24,242 100,225 160,205 240,188 300,172 380,105 480,0"],
    ["prim", "1130,0 1100,30 1100,80 1115,138 1020,135"], ["prim", "1120,12 1340,8"], ["prim", "1345,90 1380,350"],
    ["trunk", "840,0 870,35 940,62 1000,85 1025,130 1013,180 1022,250 1000,340 980,400 950,500 935,570 915,650 912,720 928,790 925,870 928,920 905,990 900,1020"],
    ["trunk", "985,217 1025,222"], ["trunk", "935,540 972,540"],
  ],
  peaks: "711,56 605,104 687,124 527,149 398,162 489,206 666,172 635,233 550,271 628,274 601,304 150,400 214,403 102,440 225,444 190,488 337,498 170,535 177,576 558,525 157,616 279,620 421,604 397,630 428,637 140,664 238,654 483,675 112,698 292,691 446,719 116,729 347,733 391,745 122,777 167,810 1216,56 1199,182",
  towns: [["Diedorf", 506, 27, 124, 34], ["Bobingen", 752, 664, 158, 34], ["Königsbrunn", 1022, 669, 208, 34]],
  woods: [["Rauher", 385, 436, 138, 40], ["Forst", 385, 484, 94, 40], ["Haunstetter", 1207, 492, 186, 34], ["Wald", 1210, 533, 78, 34]],
  airports: [], planes: "", exits: [],
  shields: [["B 300", 165, 215, 130, "c"], ["B 17", 988, 381, 110, "b"], ["B 17", 930, 848, 110, "b"]],
};

const SE: Sheet = {
  ox: 940, oy: 490, base: LAND,
  areas: [
    [FARM, "0,60 180,60 240,100 250,200 140,260 140,320 40,320 0,200"],
    [FARM, "280,80 430,40 430,110 330,120"],
    [FARM, "800,180 880,190 1000,250 1130,320 1090,420 1020,400 820,440 790,380"],
    [FARM, "830,480 960,520 1040,480 1347,440 1347,1020 820,1020 750,860 850,740 1000,660 980,580 850,560"],
    [FARM, "560,540 650,550 640,620 560,600"],
    [FARM, "170,500 330,510 470,530 420,570 180,570"],
    [FARM, "0,820 130,780 120,1020 0,1020"],
    [FARM, "190,760 330,790 520,860 620,960 560,1020 200,1020 170,860"],
    [FARM, "500,0 740,60 860,0 870,180 760,100 600,90"],
    [FARM, "860,-5 1347,-5 1347,100 900,100"],
    [FARM, "1120,0 1200,0 1200,220 1347,150 1347,270 1150,260"],
    [FARM, "660,600 780,560 790,640 700,700"],
    [FOREST, "480,-5 660,-5 700,10 680,50 620,90 570,60 500,50"],
    [FOREST, "270,20 310,10 390,-5 400,20 340,65 280,55"],
    [FOREST, "740,110 830,70 870,100 870,150 780,160 730,140"],
    [FOREST, "880,90 960,15 1000,20 1010,85 1180,100 1175,220 1100,230 1040,220 940,225 950,190 880,170"],
    [FOREST, "1190,30 1230,15 1347,25 1347,130 1240,170 1180,170"],
    [FOREST, "560,180 650,210 720,160 770,180 805,230 820,325 770,360 660,350 600,340 540,300 500,250 560,240"],
    [FOREST, "160,250 300,230 370,260 440,230 470,250 420,295 370,320 350,340 290,355 285,310 220,310 210,370 180,370 180,310 140,290"],
    [FOREST, "400,140 440,150 440,190 490,150 535,155 500,200 400,210"],
    [FOREST, "560,490 740,470 765,515 600,530 560,520"],
    [FOREST, "640,455 740,415 810,440 810,470 640,480"],
    [FOREST, "800,510 840,500 850,530 810,540"],
    [FOREST, "305,400 330,365 380,370 405,410 340,432"],
    [FOREST, "460,330 500,370 560,390 520,400 470,370"],
    [FOREST, "340,640 390,600 430,640 420,700 440,740 420,800 360,795 275,755 330,720"],
    [FOREST, "440,750 520,740 550,790 515,840 500,790 440,785"],
    [FOREST, "570,850 640,815 730,870 730,920 690,960 620,950 600,900"],
    [FOREST, "410,930 470,920 555,970 530,1030 420,1030"],
    [FOREST, "740,840 810,840 800,890 750,880"],
    [FOREST, "870,910 1000,920 1140,940 1100,1000 980,960 880,960"],
    [FOREST, "890,670 1030,640 1010,690 940,720 880,710"],
    [FOREST, "1090,450 1180,465 1190,500 1070,490"],
    [FOREST, "840,270 930,240 945,300 850,310"],
    [FOREST, "1290,650 1347,640 1347,700 1290,700"],
    [FOREST, "1290,900 1347,880 1347,990 1240,960"],
    [FOREST, "1220,710 1280,710 1250,745"], [FOREST, "1200,540 1270,540 1280,590 1220,580"],
    [FOREST, "1000,340 1040,350 1030,370"], [FOREST, "590,540 660,540 650,590 600,570"],
    [FOREST, "740,600 880,590 840,620 730,640"], [FOREST, "680,680 710,670 700,715"],
    ["#aee0b8", "1190,450 1250,435 1240,490 1200,505"], ["#aee0b8", "600,630 640,620 655,665 610,665"],
    [GRASS, "90,80 130,70 140,120 100,110"],
    [TOWN, "130,30 190,50 180,90 120,60"], [TOWN, "190,80 280,100 285,170 240,180"],
    [TOWN, "40,330 110,340 170,420 130,430 50,400"], [TOWN, "0,20 30,40 30,90 0,60"],
    [TOWN, "50,500 110,560 110,620 70,580"], [TOWN, "80,690 160,600 190,640 220,720 170,750 100,740"],
    [TOWN, "450,90 520,70 520,120 460,120"], [TOWN, "430,340 490,320 490,360 440,380"],
    [TOWN, "380,490 440,480 450,515 400,515"], [TOWN, "690,740 730,730 730,780 690,780"],
    [TOWN, "1000,430 1040,420 1040,460"], [TOWN, "1160,330 1230,300 1230,380 1190,390"],
    [TOWN, "975,540 1040,530 1030,580"], [TOWN, "980,830 1030,860 1020,900 970,880"], [TOWN, "1140,850 1190,850 1180,890"],
    [PINK, "1215,360 1270,400 1250,420"], [PINK, "1205,240 1225,220 1230,250"], [PINK, "1130,690 1165,680 1160,720"],
    [PINK, "845,315 895,320 880,335"], ["#f6d6d3", "5,260 30,330 40,420 10,400"], ["#f6d6d3", "85,600 110,610 95,630"],
    [WATER, "60,260 100,265 90,320 62,315"], [WATER, "75,75 95,85 90,110 70,105"], [WATER, "100,200 120,210 110,235 95,225"],
    ["#8a8a8a", "935,120 953,120 950,135 935,133"], ["#aaaaaa", "1153,686 1172,686 1170,699 1155,697"], ["#aaaaaa", "1182,686 1201,686 1200,699 1184,697"],
    ["#6fb57c", "627,985 650,968 655,1030 630,1030"],
  ],
  specks: [
    [GRASS, 820, 180, 1340, 1010, 150, 7], [GRASS, 0, 60, 280, 640, 56, 7], [GRASS, 280, 80, 820, 560, 60, 7],
    [FARM, 280, 60, 820, 800, 54, 17], [FOREST, 820, 480, 1340, 880, 32, 10], [FOREST, 20, 780, 600, 1010, 12, 9],
    [TOWN, 200, 80, 1320, 1000, 44, 9], [LAND, 900, 500, 1340, 900, 24, 20], ["#a4e6cb", 0, 40, 260, 700, 14, 5],
    [PINK, 0, 600, 560, 1000, 10, 7], ["#f1cda8", 1140, 780, 1340, 1000, 10, 8],
  ],
  lines: [
    ["stream", "420,0 400,50 360,90 310,110 250,130 240,160 260,200 200,220 150,290 140,340 160,400 150,480 175,490 150,560 145,640"],
    ["stream", "150,690 185,730 170,770 130,820 140,940 120,1020"],
    ["stream", "1347,265 1290,275 1210,310 1170,350 1130,410 1080,445"],
    ["road", "0,60 60,90 120,120 190,80 260,70 330,100 410,100 480,80 540,125 600,150 740,155 780,185 875,180"],
    ["road", "180,50 200,90 240,150 250,180 300,190 370,230 400,270 450,300 455,340 440,380 420,440 430,490 470,475 620,475 770,450 850,465 940,455 1010,415 1080,430 1130,400 1165,350"],
    ["road", "570,140 560,180 490,230 450,300"], ["road", "570,100 620,50 690,30 860,20"], ["road", "875,60 875,180 900,220 960,245 1060,260 1120,290 1170,340"],
    ["road", "160,610 230,590 300,550 360,540 430,495 470,525 590,545 660,560 720,590"], ["road", "450,340 480,330 520,360 620,355 680,390 840,390"],
    ["road", "565,540 570,620 640,690 690,730 700,800 720,850"], ["road", "865,330 900,400 920,500 970,540 1045,540 1050,700 1090,760 1150,840 1180,875 1260,880 1347,930"],
    ["road", "1160,0 1160,40 1185,110 1175,240 1230,280"], ["road", "1190,360 1230,390 1290,500 1280,590 1130,640 1100,770"], ["road", "1240,340 1290,380 1347,385"],
    ["road", "0,650 80,645"], ["road", "160,660 310,645"], ["road", "0,850 60,780 130,730"], ["road", "1050,740 990,750 990,830 1040,900 1080,960 1110,1020"],
    ["road", "160,660 150,760 170,880 150,1010"], ["road", "170,420 220,400 230,280 240,190"], ["road", "30,80 60,115 130,120 180,100"],
    ["border", "1075,0 1050,30 1025,60 1040,130 1080,155 1050,185 1040,210 990,240 920,235 870,240 860,270 830,290 805,350 840,380 845,410 780,430 780,470 800,520 800,570 815,610 790,650 770,680 720,715 690,690 680,660 650,640 610,600 590,555 565,560 560,580 520,620 540,680 550,750 450,740 440,785 510,790 510,850 450,855 420,910 410,950 450,990 450,1020"],
    ["border", "800,640 880,640 960,630 965,600 1005,580 955,540 980,495 1100,445 1170,480 1210,570 1280,570 1290,550 1347,560"],
    ["border", "3,90 5,180 0,220"],
    ["rail", "0,30 60,35 160,28 330,28 370,20 390,0"],
    ["rail", "0,200 15,330 30,470 50,540 100,620 160,690 240,760 300,790 370,802 450,840 540,890 620,935 720,985 800,1020"],
    ["rail", "180,740 130,770 115,840 130,930 125,1020"],
    ["prim", "55,0 50,60 20,125 5,140"], ["prim", "0,80 20,220 40,390 55,480 80,545 115,610 80,645 72,690 110,740 150,755 180,800 250,885 270,900 360,917 440,912 510,917 560,910 640,885 715,852 770,900 790,950 805,975"],
    ["mway", "868,0 900,45 960,85 995,120 1040,185 1080,225 1170,280 1225,335 1320,430"],
  ],
  peaks: "",
  towns: [["Friedberg", 143, 23, 160, 34], ["Mering", 141, 680, 116, 34]],
  woods: [["Eurasburger", 686, 265, 202, 34], ["Forst", 686, 305, 80, 34]],
  airports: [["Dürabuch", 1253, 664, 156, 34]],
  planes: "1253,701",
  exits: [["76", 1231, 359]],
  shields: [["A 8", 898, 49, 90, "a"], ["A 8", 1075, 219, 90, "a"], ["B 2", 51, 456, 88, "c"], ["B 2", 313, 901, 88, "c"], ["B 2", 568, 912, 88, "c"], ["A 8", 1361, 453, 90, "a"]],
};

const sheets: [Sheet, string][] = [[NW, "sheet-left"], [NE, "sheet-right"], [SW, "sheet-left-low"], [SE, "sheet-right-low"]];

const lineStyle: Record<Line[0], { stroke: string; w: number; dash?: string; op?: number }> = {
  road: { stroke: "#bdbcc0", w: 3.5 },
  stream: { stroke: WATER, w: 7 },
  river: { stroke: WATER, w: 10 },
  rail: { stroke: "#777777", w: 4.5 },
  mway: { stroke: "#e66e89", w: 9 },
  trunk: { stroke: "#f9957a", w: 10 },
  prim: { stroke: "#fbc37c", w: 6.5 },
  border: { stroke: "#b673c0", w: 7, dash: "18 8 5 8", op: 0.65 },
};

const shieldStyle = {
  a: { fill: "#e9c4cd", stroke: "#cf9aa9", text: "#6d2a3c" },
  b: { fill: "#f3d3c9", stroke: "#d8a695", text: "#6e3a2c" },
  c: { fill: "#f2e0c8", stroke: "#d0b594", text: "#6a4d2a" },
};

function specks(s: Sheet) {
  return s.specks.map(([color, x0, y0, x1, y1, n, r], k) => {
    const rnd = makeRng(k * 977 + s.ox * 31 + s.oy * 7);
    let d = "";
    for (let i = 0; i < n; i++) {
      const cx = x0 + rnd() * (x1 - x0);
      const cy = y0 + rnd() * (y1 - y0);
      const turn = rnd() * Math.PI;
      const rx = r * (0.5 + rnd() * 1.6);
      const ry = r * (0.25 + rnd() * 0.65);
      const corners = 7;
      for (let c = 0; c < corners; c++) {
        const a = (c / corners) * Math.PI * 2;
        const q = 0.4 + rnd() * 1.1;
        const px = Math.cos(a) * rx * q;
        const py = Math.sin(a) * ry * q;
        const X = cx + px * Math.cos(turn) - py * Math.sin(turn);
        const Y = cy + px * Math.sin(turn) + py * Math.cos(turn);
        d += (c ? "L" : "M") + X.toFixed(0) + " " + Y.toFixed(0);
      }
      d += "Z";
    }
    return <path key={k} d={d} fill={color} />;
  });
}

function SheetAreas({ s, id }: { s: Sheet; id: string }) {
  const ground = s.areas.filter(([c]) => c === FARM || c === LAND);
  return (
    <g transform={`translate(${s.ox} ${s.oy}) scale(.33333)`} clipPath={`url(#${id})`}>
      <rect width="1382" height="1040" fill={s.base} />
      {ground.map(([c, p], i) => <path key={i} d={rough(p, i * 71 + s.ox, 0.18)} fill={c} />)}
      <g>{specks(s)}</g>
      {s.areas.map(([c, p], i) =>
        (c === FARM || c === LAND) && i < 5 ? null : (
          <path key={i} d={rough(p, i * 131 + s.oy + s.ox, c === FOREST ? 0.28 : 0.18, c === FOREST ? 8 : 12)} fill={c} />
        ),
      )}
    </g>
  );
}

function SheetLines({ s, id }: { s: Sheet; id: string }) {
  const order: Line[0][] = ["stream", "river", "road", "border", "rail", "prim", "trunk", "mway"];
  return (
    <g transform={`translate(${s.ox} ${s.oy}) scale(.33333)`} clipPath={`url(#${id})`} fill="none" strokeLinejoin="round">
      {order.map((kind) =>
        s.lines.filter(([k]) => k === kind).map(([, p], i) => {
          const st = lineStyle[kind];
          return <path key={kind + i} d={smooth(p)} stroke={st.stroke} strokeWidth={st.w} strokeDasharray={st.dash} opacity={st.op} />;
        }),
      )}
    </g>
  );
}

function SheetLabels({ s }: { s: Sheet }) {
  const halo = { stroke: "#ffffff", strokeOpacity: 0.75, strokeWidth: 7, paintOrder: "stroke" as const, strokeLinejoin: "round" as const };
  return (
    <g transform={`translate(${s.ox} ${s.oy}) scale(.33333)`} fontFamily="'DejaVu Sans', sans-serif" textAnchor="middle">
      {s.peaks && pts(s.peaks).map(([x, y], i) => <path key={i} d={`M${x} ${y - 13}l12.500 23h-25z`} fill="#cf8c51" />)}
      {s.planes && pts(s.planes).map(([x, y], i) => (
        <path key={i} transform={`translate(${x} ${y})`} fill="#8262c0" d="M0-20c3 0 4 4 4 8v7l17 10v5L4 5v9l6 4v3L0 18l-10 3v-3l6-4V5l-17 5V5L-4-5v-7c0-4 1-8 4-8z" />
      ))}
      {s.woods.map(([t, x, y, w, z], i) => (
        <text key={i} x={x} y={y} textLength={w} lengthAdjust="spacingAndGlyphs" fontSize={z} fontStyle="italic" fill="#56735a" {...halo} strokeOpacity={0.45}>{t}</text>
      ))}
      {s.airports.map(([t, x, y, w, z], i) => (
        <text key={i} x={x} y={y} textLength={w} lengthAdjust="spacingAndGlyphs" fontSize={z} fontStyle="italic" fill="#7d5fbe" {...halo}>{t}</text>
      ))}
      {s.exits.map(([t, x, y], i) => (
        <text key={i} x={x} y={y} textLength={t.length > 2 ? 59 : 38} lengthAdjust="spacingAndGlyphs" fontSize={34} fontStyle="italic" fill="#a8323f" {...halo} strokeOpacity={0.95} strokeWidth={9}>{t}</text>
      ))}
      {s.shields.map(([t, x, y, w, k], i) => {
        const c = shieldStyle[k];
        return (
          <g key={i}>
            <rect x={x - w / 2} y={y - 24} width={w} height={48} rx={6} fill={c.fill} stroke={c.stroke} strokeWidth={4} />
            <text x={x} y={y + 12} textLength={w - (w > 100 ? 50 : 46)} lengthAdjust="spacingAndGlyphs" fontSize={33} fill={c.text} stroke={c.text} strokeWidth={0.8}>{t}</text>
          </g>
        );
      })}
      {s.towns.map(([t, x, y, w, z], i) => (
        <text key={i} x={x} y={y} textLength={w} lengthAdjust="spacingAndGlyphs" fontSize={z} fill="#333333" {...halo}>{t}</text>
      ))}
    </g>
  );
}

function Map() {
  return (
    <div className="relative h-[680px] w-[891px] shrink-0 overflow-hidden">
      <svg viewBox="498 151 891 680" className="block h-[680px] w-[891px]">
        <defs>
          <clipPath id="sheet-left"><rect width="1351" height="1021" /></clipPath>
          <clipPath id="sheet-right"><rect width="1382" height="1021" /></clipPath>
          <clipPath id="sheet-left-low"><rect width="1351" height="1040" /></clipPath>
          <clipPath id="sheet-right-low"><rect width="1382" height="1040" /></clipPath>
          <linearGradient id="pin" x1="0" y1="0" x2="0" y2="1">
            <stop offset="0" stopColor="#3b8fd2" />
            <stop offset="1" stopColor="#1b73b9" />
          </linearGradient>
          <filter id="soft" x="-50%" y="-50%" width="200%" height="200%"><feGaussianBlur stdDeviation="2.500" /></filter>
        </defs>
        {sheets.map(([s, id]) => <SheetAreas key={id} s={s} id={id} />)}
        {sheets.map(([s, id]) => <SheetLines key={id} s={s} id={id} />)}
        {sheets.map(([s, id]) => <SheetLabels key={id} s={s} />)}
        <path d="M945 489l8-20c4-6 12-6 13-1 1 6-6 13-21 21z" fill="#000" opacity=".38" filter="url(#soft)" />
        <g transform="translate(930.800 445.500)">
          <path d="M13 44C10 34.500.5 25 .5 13.500.5 6 6 .5 13 .5s13 5.500 13 13C26 25 16 34.500 13 44z" fill="url(#pin)" stroke="#1d6fae" strokeWidth="1" />
          <circle cx="13" cy="14" r="4.600" fill="#fff" />
        </g>
      </svg>
      <div className="absolute left-[11px] top-3 flex w-[30px] flex-col overflow-hidden rounded bg-white shadow-[0_1px_5px_rgba(0,0,0,0.65)]">
        <button aria-label="+" className="flex h-[29px] items-center justify-center border-b border-[#ccc]">
          <svg viewBox="0 0 11 11" className="size-[11px]" stroke="#000" strokeWidth="2.200"><path d="M5.500 0v11M0 5.500h11" /></svg>
        </button>
        <button aria-label="-" className="flex h-[30px] items-center justify-center pb-0.5 pl-px">
          <svg viewBox="0 0 10 10" className="size-2.5" stroke="#000" strokeWidth="2.200"><path d="M0 5h10" /></svg>
        </button>
      </div>
      <div className="absolute bottom-0 right-0 flex h-[19px] items-center bg-white/70 px-[5px] font-['Liberation_Sans',sans-serif] text-[12px] tracking-[0.31px] text-[#333]">
        <span className="text-[#0078a8]">Leaflet</span>&nbsp;| ©&nbsp;<span className="text-[#0078a8]">OpenStreetMap</span>&nbsp;contributors
      </div>
    </div>
  );
}

/* ---------- form ---------- */

const inputBox = "border border-[#e2e4e4] bg-white shadow-[inset_0_1px_2px_rgba(0,0,0,0.06)]";

function Field({ label, children }: { label: string; children: ReactNode }) {
  return (
    <div className="h-[83px]">
      <div className="h-[28px] pl-px pt-1 text-[12px] font-bold leading-[17px] tracking-[0.83px] text-[#a5c8ce]">{label}</div>
      {children}
    </div>
  );
}

function LocationForm() {
  return (
    <div className="ml-[34px] w-[429px] text-[15px] tracking-[0.42px]">
      <Field label="ADRESSE">
        <div className="flex h-[38px]">
          <div className={`flex-1 ${inputBox}`} />
          <div className="-ml-px flex w-[49px] items-center justify-center border border-[#dcdede] bg-[#fbfbfb] pb-[3px] text-[#8d9494] shadow-[inset_0_-4px_0_#ececec]">
            <Magnifier className="size-[15px]" />
          </div>
        </div>
      </Field>
      <Field label="BREITENGRAD">
        <div className={`flex h-[39px] items-center pl-3.5 tracking-[-0.22px] text-[#8f9da0] ${inputBox}`}>48.356011</div>
      </Field>
      <Field label="LÄNGENGRAD">
        <div className={`flex h-[39px] items-center pl-3.5 tracking-[-0.22px] text-[#8f9da0] ${inputBox}`}>10.957442</div>
      </Field>
      <Field label="HÖHE">
        <div className={`flex h-[39px] items-center justify-end pb-px pr-3.5 ${inputBox}`}>
          <svg viewBox="0 0 18 18" className="h-[18px] w-[18px]">
            <rect width="18" height="18" fill="#ececec" />
            <path d="M1.500 1v7.500h15V1M1.500 10v6.500h15V10z" fill="#f4f4f4" stroke="#a9a9a9" />
            <path d="M1 8.500h16" stroke="#9c9c9c" />
            <path d="M5 7l4-4 4 4zM5 11h8l-4 4z" fill="#000" />
          </svg>
        </div>
      </Field>
      <button className="mt-px flex h-[42px] w-[101px] items-center justify-center border border-[#27b2cf] bg-[#27b2cf] pt-px text-white shadow-[inset_0_-5px_0_#23a1bb]">
        Speichern
      </button>
      <p className="mt-[84px] pl-px leading-6 text-[#333]">Kartenausschnitt durch Ziehen verschieben</p>
      <div className="mt-[9px] flex items-center leading-6 tracking-[0.48px] text-[#5bc0de]">
        <span>Zentrieren</span>
        <span className="-mt-1 ml-[21px] size-3.5 rounded-full border-[2.500px] border-[#8f9a9c]" />
        <span className="ml-[7px] tracking-[0.42px]">Automatische Aktualisierung</span>
      </div>
    </div>
  );
}

/* ---------- page ---------- */

export default function App() {
  return (
    <div className="flex h-[1080px] w-[1920px] overflow-hidden border-t border-black bg-[#f2f2f2] font-['Roboto','Liberation_Sans',sans-serif] antialiased">
      <Sidebar />
      <div className="flex flex-1 flex-col">
        <header className="flex h-[51px] items-center justify-end bg-[#2d3637] pr-[23px] text-white">
          <div className="flex h-[34px] w-[204px] items-center rounded-full bg-[#d5d7d6] pl-3 shadow-[inset_0_1px_2px_rgba(0,0,0,0.25)]">
            <span className="flex-1 pb-0.5 text-[13.500px] text-[#858b8b]">suche...</span>
            <FaCaretDown className="size-3 text-[#3c4647]" />
            <Magnifier className="ml-[3px] mr-4 size-[13.500px] text-[#4a5354]" />
          </div>
          <span className="ml-[23px] pb-0.5 text-[16px] tracking-[0.06px]">A. Feiler</span>
          <Person className="ml-[5px] mt-0.5 h-[19px] w-[18px]" />
          <Grid9 className="ml-8 mb-0.5 h-[26px] w-[33px]" />
        </header>
        <div className="flex h-[65px] justify-between pl-[34px] pr-[51px]">
          <h1 className="mt-[37px] flex h-[22px] items-center text-[29px] font-light tracking-[0.58px] text-[#333]">
            <span className="mr-[9px] h-[22px] w-[5px] bg-[#27b2cf]" />
            <span className="pt-px">WEIDNER HOLDING GMBH &amp; CO.KG</span>
          </h1>
          <FaCog className="mt-[45px] size-[19px] text-[#5bc0de]" />
        </div>
        <div className="flex">
          <Tabs />
          <main className="flex h-[765px] w-[1422px] bg-[#fcfcfc] pl-[34px] pt-[34px]">
            <Map />
            <LocationForm />
          </main>
        </div>
      </div>
    </div>
  );
}
